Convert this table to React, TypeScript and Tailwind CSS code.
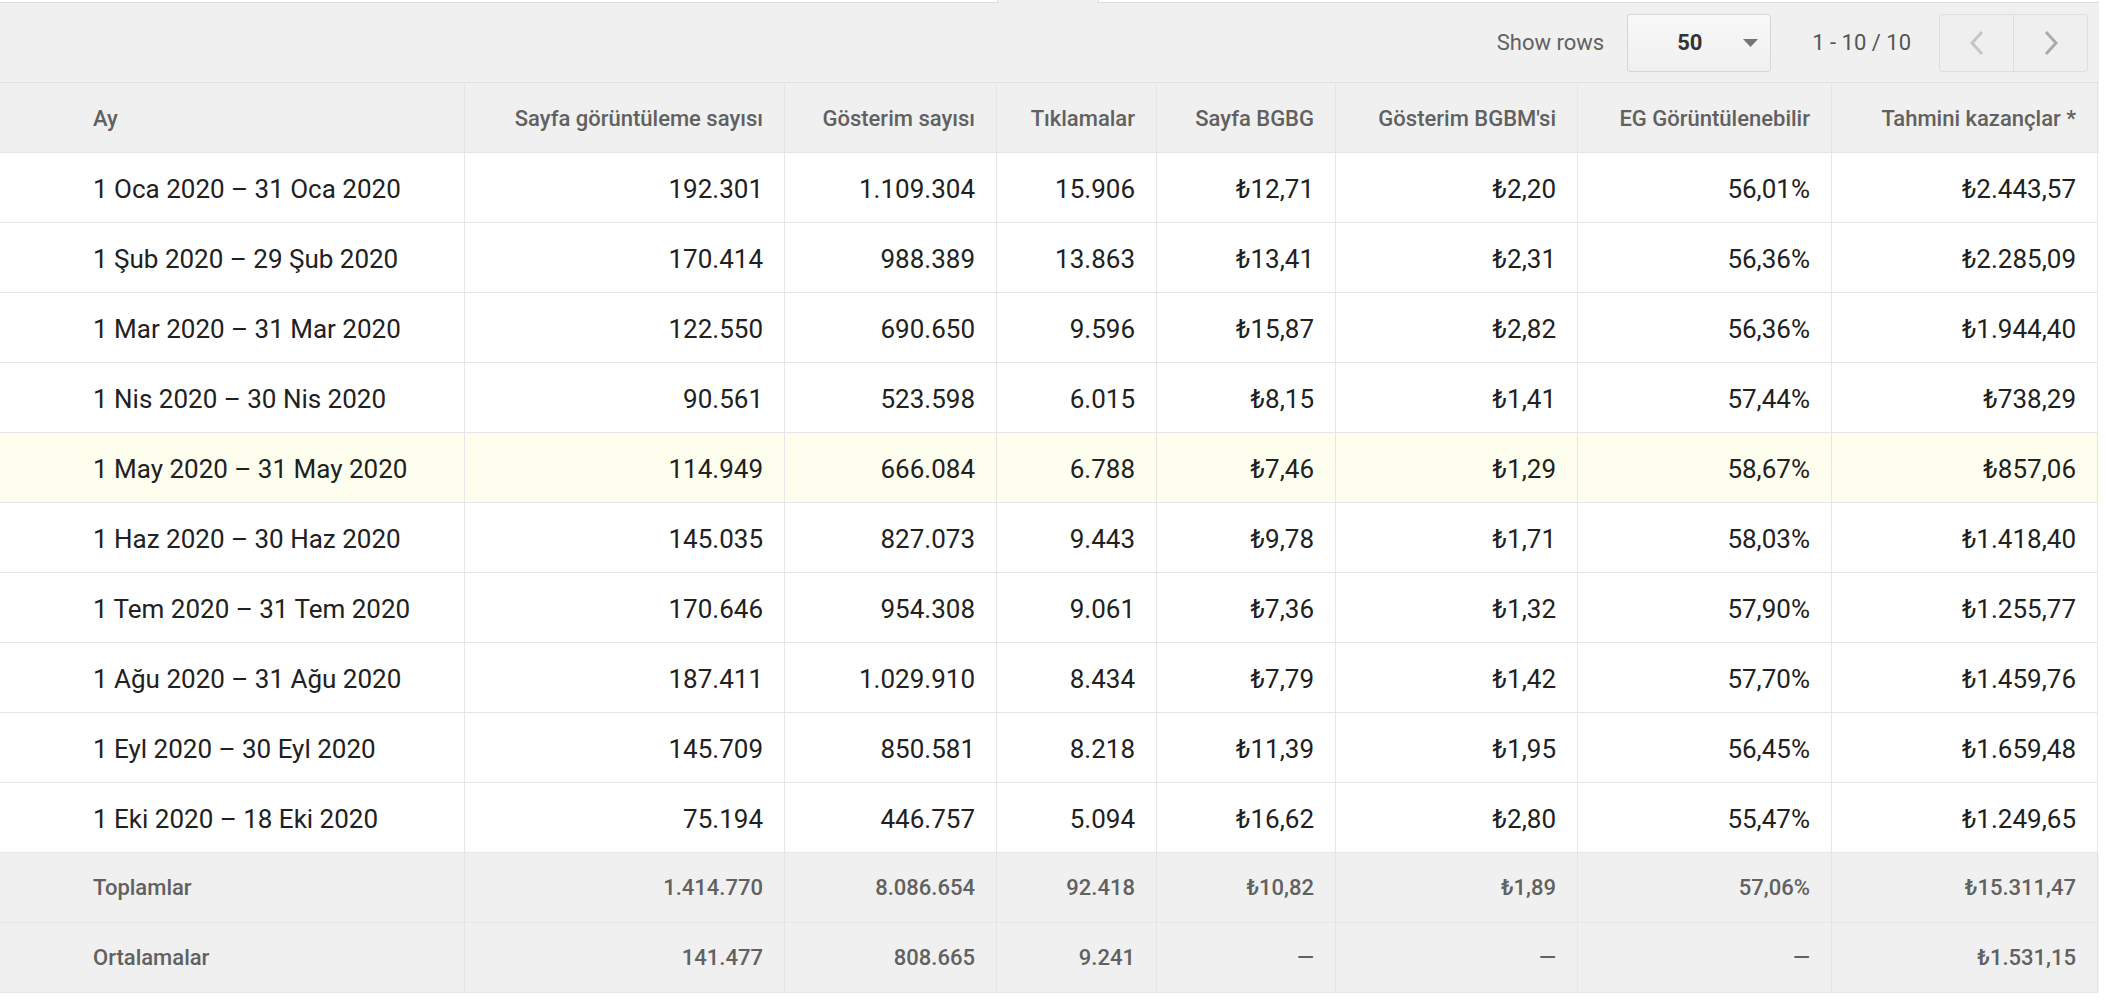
import React from 'react'

// Column widths come from the source table (pixel widths incl. right border)
const columns = [
  { label: 'Ay', left: true },
  { label: 'Sayfa görüntüleme sayısı' },
  { label: 'Gösterim sayısı' },
  { label: 'Tıklamalar' },
  { label: 'Sayfa BGBG' },
  { label: "Gösterim BGBM'si" },
  { label: 'EG Görüntülenebilir' },
  { label: 'Tahmini kazançlar *' },
]

const rows: string[][] = [
  ['1 Oca 2020 – 31 Oca 2020', '192.301', '1.109.304', '15.906', '₺12,71', '₺2,20', '56,01%', '₺2.443,57'],
  ['1 Şub 2020 – 29 Şub 2020', '170.414', '988.389', '13.863', '₺13,41', '₺2,31', '56,36%', '₺2.285,09'],
  ['1 Mar 2020 – 31 Mar 2020', '122.550', '690.650', '9.596', '₺15,87', '₺2,82', '56,36%', '₺1.944,40'],
  ['1 Nis 2020 – 30 Nis 2020', '90.561', '523.598', '6.015', '₺8,15', '₺1,41', '57,44%', '₺738,29'],
  ['1 May 2020 – 31 May 2020', '114.949', '666.084', '6.788', '₺7,46', '₺1,29', '58,67%', '₺857,06'],
  ['1 Haz 2020 – 30 Haz 2020', '145.035', '827.073', '9.443', '₺9,78', '₺1,71', '58,03%', '₺1.418,40'],
  ['1 Tem 2020 – 31 Tem 2020', '170.646', '954.308', '9.061', '₺7,36', '₺1,32', '57,90%', '₺1.255,77'],
  ['1 Ağu 2020 – 31 Ağu 2020', '187.411', '1.029.910', '8.434', '₺7,79', '₺1,42', '57,70%', '₺1.459,76'],
  ['1 Eyl 2020 – 30 Eyl 2020', '145.709', '850.581', '8.218', '₺11,39', '₺1,95', '56,45%', '₺1.659,48'],
  ['1 Eki 2020 – 18 Eki 2020', '75.194', '446.757', '5.094', '₺16,62', '₺2,80', '55,47%', '₺1.249,65'],
]

const footer: string[][] = [
  ['Toplamlar', '1.414.770', '8.086.654', '92.418', '₺10,82', '₺1,89', '57,06%', '₺15.311,47'],
  ['Ortalamalar', '141.477', '808.665', '9.241', '—', '—', '—', '₺1.531,15'],
]

const HIGHLIGHT = 4

const gridCols =
  'grid grid-cols-[465px_320px_212px_160px_179px_242px_254px_266px]'

function Cell({ children, left, className = '' }: { children: React.ReactNode; left?: boolean; className?: string }) {
  return (
    <div
      className={`flex h-[70px] items-center border-r border-b border-[#e6e6e6] ${
        left ? 'justify-start pl-[93px]' : 'justify-end pr-[21px]'
      } ${className}`}
    >
      {children}
    </div>
  )
}

function Chevron({ dir, color }: { dir: 'left' | 'right'; color: string }) {
  return (
    <svg width="18" height="26" viewBox="0 0 18 26" fill="none">
      <path
        d={dir === 'left' ? 'M14 2L4 13l10 11' : 'M4 2l10 11L4 24'}
        stroke={color}
        strokeWidth="3"
      />
    </svg>
  )
}

export default function App() {
  return (
    <div className="min-h-[1000px] w-[2106px] bg-white font-['Roboto','Noto_Sans',sans-serif]">
      <div className="w-[2099px]">
        {/* Tab notch strip */}
        <div className="flex h-[3px]">
          <div className="w-[997px] border-b border-[#dcdcdc]" />
          <div className="w-[102px] border-x border-[#dcdcdc] bg-[#f0f0f0]" />
          <div className="flex-1 border-b border-[#dcdcdc]" />
        </div>

        {/* Toolbar */}
        <div className="flex h-[80px] items-center justify-end border-b border-[#e2e2e2] bg-[#f0f0f0] pr-[11px]">
          <span className="text-[22px] text-[#616161]">Show rows</span>
          <div className="ml-[23px] flex h-[58px] w-[144px] items-center rounded-[3px] border border-[#d6d6d6] bg-gradient-to-b from-[#f8f8f8] to-[#f0f0f0] pr-[12px] pl-[49px]">
            <span className="text-[22px] font-bold text-[#333]">50</span>
            <svg className="ml-auto" width="15" height="8" viewBox="0 0 15 8">
              <path d="M0 0h15L7.5 8z" fill="#757575" />
            </svg>
          </div>
          <span className="ml-[41px] text-[22px] text-[#555]">1 - 10 / 10</span>
          <div className="ml-[28px] flex h-[58px] overflow-hidden rounded-[3px] border border-[#dedede] bg-[#efefef]">
            <div className="flex w-[74px] items-center justify-center border-r border-[#dcdcdc]">
              <Chevron dir="left" color="#c6c6c6" />
            </div>
            <div className="flex w-[73px] items-center justify-center">
              <Chevron dir="right" color="#ababab" />
            </div>
          </div>
        </div>

        {/* Header */}
        <div className={`${gridCols} bg-[#f0f0f0] text-[22px] font-medium text-[#616161]`}>
          {columns.map((c) => (
            <Cell key={c.label} left={c.left} className="pt-[2px]">
              {c.label}
            </Cell>
          ))}
        </div>

        {/* Body */}
        {rows.map((r, i) => (
          <div
            key={r[0]}
            className={`${gridCols} text-[26px] text-[#212121] ${i === HIGHLIGHT ? 'bg-[#fefeee]' : 'bg-white'}`}
          >
            {r.map((v, j) => (
              <Cell key={j} left={j === 0} className="pt-[4px]">
                {v}
              </Cell>
            ))}
          </div>
        ))}

        {/* Totals */}
        {footer.map((r) => (
          <div key={r[0]} className={`${gridCols} bg-[#f0f0f0] text-[22px] font-medium text-[#616161]`}>
            {r.map((v, j) => (
              <Cell key={j} left={j === 0}>
                {v}
              </Cell>
            ))}
          </div>
        ))}
      </div>
    </div>
  )
}
